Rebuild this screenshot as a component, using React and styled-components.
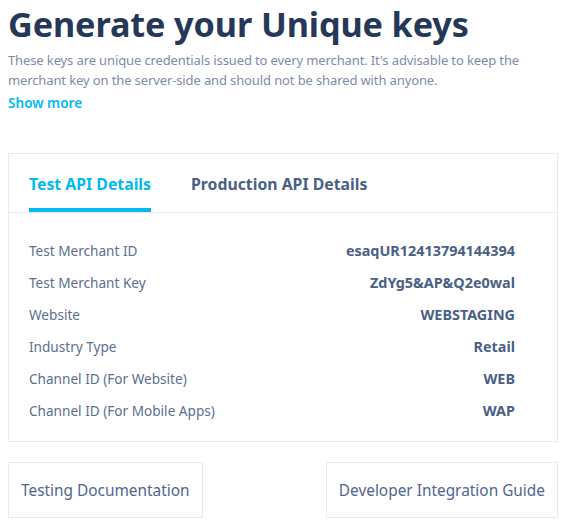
import React from "react";
import styled, { createGlobalStyle } from "styled-components";

const Global = createGlobalStyle`
  html, body { margin: 0; padding: 0; background: #fff; }
  body { font-family: "Noto Sans", "Open Sans", sans-serif; }
`;

const Page = styled.div`
  width: 550px;
  margin-left: 8px;
`;

const Title = styled.h1`
  margin: 0;
  font-size: 34.2px;
  line-height: 48px;
  font-weight: 700;
  color: #253858;
  letter-spacing: -0.1px;
`;

const Intro = styled.p`
  margin: 2px 0 0;
  font-size: 13px;
  line-height: 20px;
  letter-spacing: -0.12px;
  color: #7d8ca8;
`;

const ShowMore = styled.a`
  display: block;
  margin-top: 3px;
  font-size: 13.6px;
  line-height: 20px;
  font-weight: 600;
  color: #00b9f5;
  cursor: pointer;
`;

const Card = styled.section`
  margin-top: 40px;
  border: 1px solid #e8ebf2;
`;

const TabBar = styled.div`
  display: flex;
  gap: 40px;
  padding: 0 20px;
  border-bottom: 1px solid #e8ebf2;
`;

const Tab = styled.div`
  font-size: 15.8px;
  font-weight: 700;
  line-height: 20px;
  padding: 20px 0 14px;
  color: ${(p) => (p.$active ? "#00b9f1" : "#4a5f85")};
  border-bottom: 4px solid ${(p) => (p.$active ? "#00b9f1" : "transparent")};
`;

const Rows = styled.div`
  padding: 21px 42px 15px 20px;
`;

const Row = styled.div`
  display: flex;
  justify-content: space-between;
  align-items: center;
  height: 32px;
`;

const Label = styled.span`
  font-size: 13.6px;
  color: #5b6f90;
`;

const Value = styled.span`
  font-size: 14.4px;
  color: #4a5f85;
  font-weight: 700;
`;

const Buttons = styled.div`
  display: flex;
  justify-content: space-between;
  margin-top: 20px;
`;

const LinkButton = styled.div`
  display: flex;
  align-items: center;
  height: 54px;
  padding: 0 12px;
  border: 1px solid #e8ebf2;
  font-size: 15.4px;
  color: #506590;
`;

const rows = [
  ["Test Merchant ID", "esaqUR12413794144394"],
  ["Test Merchant Key", "ZdYg5&AP&Q2e0wal"],
  ["Website", "WEBSTAGING"],
  ["Industry Type", "Retail"],
  ["Channel ID (For Website)", "WEB"],
  ["Channel ID (For Mobile Apps)", "WAP"],
];

export default function App() {
  return (
    <>
      <Global />
      <Page>
        <Title>Generate your Unique keys</Title>
        <Intro>
          These keys are unique credentials issued to every merchant. It's advisable to keep the
          merchant key on the server-side and should not be shared with anyone.
        </Intro>
        <ShowMore>Show more</ShowMore>
        <Card>
          <TabBar>
            <Tab $active>Test API Details</Tab>
            <Tab>Production API Details</Tab>
          </TabBar>
          <Rows>
            {rows.map(([l, v]) => (
              <Row key={l}>
                <Label>{l}</Label>
                <Value>{v}</Value>
              </Row>
            ))}
          </Rows>
        </Card>
        <Buttons>
          <LinkButton>Testing Documentation</LinkButton>
          <LinkButton>Developer Integration Guide</LinkButton>
        </Buttons>
      </Page>
    </>
  );
}
